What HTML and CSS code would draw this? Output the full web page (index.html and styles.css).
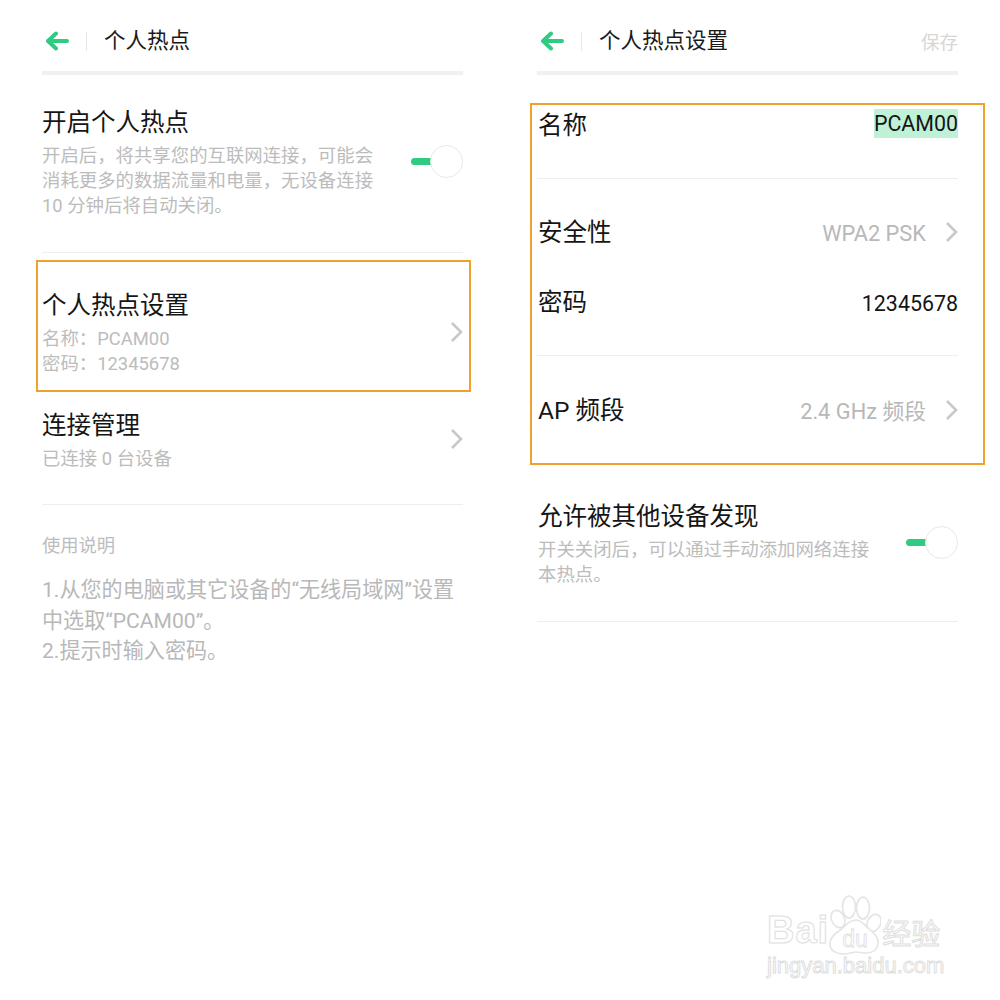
FILE: index.html
```html
<!DOCTYPE html>
<html lang="zh-CN">
<head>
  <meta charset="UTF-8">
  <title>个人热点</title>
  <link rel="stylesheet" href="styles.css">
</head>
<body>
  <div class="page">
    <!-- 左边：个人热点 -->
    <section class="pane">
      <header class="topbar">
        <svg class="back" width="24" height="20" viewBox="0 0 24 20"><path d="M22 10H4M11 2.5 3 10l8 7.5" fill="none" stroke="#2ecb80" stroke-width="4" stroke-linecap="round" stroke-linejoin="round"/></svg>
        <span class="sep"></span>
        <h1 class="title">个人热点</h1>
      </header>

      <div class="item item-hotspot">
        <div class="text">
          <h2 class="name">开启个人热点</h2>
          <p class="desc">开启后，将共享您的互联网连接，可能会消耗更多的数据流量和电量，无设备连接 10 分钟后将自动关闭。</p>
        </div>
        <span class="toggle"><span class="track"></span><span class="knob"></span></span>
      </div>

      <div class="item item-settings">
        <div class="text">
          <h2 class="name">个人热点设置</h2>
          <p class="desc">名称：PCAM00<br>密码：12345678</p>
        </div>
        <svg class="chevron" width="13" height="22" viewBox="0 0 13 22"><path d="M2 2l9 9-9 9" fill="none" stroke="#c8c8c8" stroke-width="2.6"/></svg>
      </div>

      <div class="item item-manage">
        <div class="text">
          <h2 class="name">连接管理</h2>
          <p class="desc">已连接 0 台设备</p>
        </div>
        <svg class="chevron" width="13" height="22" viewBox="0 0 13 22"><path d="M2 2l9 9-9 9" fill="none" stroke="#c8c8c8" stroke-width="2.6"/></svg>
      </div>

      <p class="help-title">使用说明</p>
      <p class="help">1.从您的电脑或其它设备的“无线局域网”设置中选取“PCAM00”。<br>2.提示时输入密码。</p>

      <div class="mark mark-left"></div>
    </section>

    <!-- 右边：个人热点设置 -->
    <section class="pane">
      <header class="topbar">
        <svg class="back" width="24" height="20" viewBox="0 0 24 20"><path d="M22 10H4M11 2.5 3 10l8 7.5" fill="none" stroke="#2ecb80" stroke-width="4" stroke-linecap="round" stroke-linejoin="round"/></svg>
        <span class="sep"></span>
        <h1 class="title">个人热点设置</h1>
        <span class="save">保存</span>
      </header>

      <div class="field field-name">
        <span class="name">名称</span>
        <span class="value"><span class="selected">PCAM00</span></span>
      </div>
      <div class="field field-security">
        <span class="name">安全性</span>
        <span class="value-muted">WPA2 PSK</span>
        <svg class="chevron" width="13" height="22" viewBox="0 0 13 22"><path d="M2 2l9 9-9 9" fill="none" stroke="#c8c8c8" stroke-width="2.6"/></svg>
      </div>
      <div class="field field-password">
        <span class="name">密码</span>
        <span class="value">12345678</span>
      </div>
      <div class="field field-band">
        <span class="name">AP 频段</span>
        <span class="value-muted">2.4 GHz 频段</span>
        <svg class="chevron" width="13" height="22" viewBox="0 0 13 22"><path d="M2 2l9 9-9 9" fill="none" stroke="#c8c8c8" stroke-width="2.6"/></svg>
      </div>

      <div class="item item-discover">
        <div class="text">
          <h2 class="name">允许被其他设备发现</h2>
          <p class="desc">开关关闭后，可以通过手动添加网络连接本热点。</p>
        </div>
        <span class="toggle"><span class="track"></span><span class="knob"></span></span>
      </div>

      <div class="mark mark-right"></div>
    </section>
  </div>

  <!-- 水印 -->
  <div class="watermark">
    <div class="wm-top">
      <span class="wm-bai">Bai</span>
      <svg class="wm-paw" width="52" height="60" viewBox="0 0 52 60">
        <g fill="#fff" stroke="#e4e4e4" stroke-width="1.6">
          <ellipse cx="9" cy="24" rx="6.5" ry="9" transform="rotate(-25 9 24)"/>
          <ellipse cx="20" cy="12" rx="6.5" ry="11"/>
          <ellipse cx="34" cy="13" rx="6.5" ry="11"/>
          <ellipse cx="45" cy="28" rx="6.5" ry="9" transform="rotate(25 45 28)"/>
          <path d="M27 25c6 0 9 6 13 9 6 5 10 9 9 15-1 7-7 9-12 9-4 0-7-1-10-1s-7 2-12 2c-7 0-14-3-14-10 0-6 4-10 9-13 6-4 9-11 17-11z"/>
        </g>
        <text x="26" y="52" text-anchor="middle" class="wm-du">du</text>
      </svg>
      <span class="wm-jy">经验</span>
    </div>
    <div class="wm-url">jingyan.baidu.com</div>
  </div>
</body>
</html>
```

FILE: styles.css
```css
* {
  box-sizing: border-box;
}

html,
body {
  margin: 0;
  background: #fff;
}

body {
  font-family: Roboto, "Noto Sans CJK SC", sans-serif;
  color: #151515;
}

h1,
h2,
p {
  margin: 0;
  font-weight: normal;
}

.page {
  display: flex;
  height: 1000px;
}

.pane {
  position: relative;
  width: 495px;
  padding: 0 32px 0 42px;
}

/* top bar */
.topbar {
  display: flex;
  align-items: center;
  height: 75px;
  padding: 11px 5px 0 3px;
  border-bottom: 4px solid #f0f0f0;
}

.back {
  margin-right: 17px;
}

.sep {
  width: 1px;
  height: 19px;
  background: #e8e8e8;
  margin-right: 17px;
}

.title {
  font-size: 21.5px;
  line-height: 30px;
  color: #1a1a1a;
}

.save {
  margin-left: auto;
  margin-right: -5px;
  font-size: 18.5px;
  color: #d6d6d6;
}

/* list rows */
.item {
  display: flex;
  align-items: center;
  justify-content: space-between;
}

.name {
  font-size: 24.5px;
  line-height: 34px;
}

.desc {
  margin-top: 3px;
  font-size: 18.4px;
  line-height: 25px;
  color: #bcbcbc;
}

.item-hotspot {
  padding: 31px 0 34px;
  border-bottom: 1px solid #eee;
}

.item-hotspot .text,
.item-discover .text {
  width: 340px;
}

.item-settings {
  padding: 36px 0 32px;
}

.item-manage {
  padding: 1px 0 33px;
  border-bottom: 1px solid #eee;
}

.item-discover {
  padding: 72px 0 34px;
  border-bottom: 1px solid #eee;
}

.item-discover .text {
  margin-left: 1px;
}

.chevron {
  flex: none;
  margin-bottom: 2px;
}

.toggle {
  display: flex;
  align-items: center;
  flex: none;
  margin-bottom: 2px;
}

.track {
  width: 20px;
  height: 7px;
  border-radius: 4px 0 0 4px;
  background: #2ecb80;
}

.knob {
  width: 33px;
  height: 33px;
  margin-left: -1px;
  border: 1px solid #e8e8e8;
  border-radius: 50%;
  background: #fff;
}

/* help text */
.help-title {
  margin-top: 28px;
  font-size: 18.3px;
  line-height: 26px;
  color: #bcbcbc;
}

.help {
  margin-top: 16px;
  font-size: 21.1px;
  line-height: 30.5px;
  color: #b8b8b8;
}

/* settings fields */
.field {
  display: flex;
  align-items: center;
}

.field .name {
  margin-right: auto;
  margin-left: 1px;
}

.value {
  font-size: 21.4px;
}

.selected {
  display: block;
  margin-top: 2px;
  line-height: 29px;
  background: #bff1d6;
}

.value-muted {
  margin-right: 19px;
  font-size: 21.8px;
  color: #b8b8b8;
}

.field-name {
  align-items: flex-start;
  padding: 32px 0 35px;
  border-bottom: 1px solid #eee;
}

.field-name .name {
  margin-top: 2px;
}

.field-security {
  padding: 37px 0 0;
}

.field-password {
  padding: 36px 0 35px;
  border-bottom: 1px solid #eee;
}

.field-band {
  padding: 38px 0 0;
}

.field-band .value-muted,
.field-band .chevron {
  margin-bottom: 3px;
}

/* orange highlight boxes over the screenshot */
.mark {
  position: absolute;
  border: 2px solid #f0a030;
}

.mark-left {
  left: 36px;
  top: 260px;
  width: 435px;
  height: 132px;
}

.mark-right {
  left: 35px;
  top: 103px;
  width: 455px;
  height: 362px;
}

/* watermark */
.watermark {
  position: absolute;
  left: 767px;
  top: 892px;
  width: 182px;
  font-family: "Liberation Sans", sans-serif;
  color: #fff;
  -webkit-text-stroke: 1px #dedede;
}

.wm-top {
  display: flex;
  align-items: flex-end;
  height: 60px;
}

.wm-bai {
  font-size: 38px;
  line-height: 44px;
  font-weight: bold;
  letter-spacing: 1px;
}

.wm-paw {
  flex: none;
  margin-left: 0;
  margin-bottom: -3px;
}

.wm-du {
  font-size: 23px;
  fill: #fff;
  stroke: #dedede;
  stroke-width: 0.8;
}

.wm-jy {
  margin-left: 1px;
  font-family: "Noto Sans CJK SC", sans-serif;
  font-size: 29px;
  line-height: 40px;
}

.wm-url {
  margin-top: 2px;
  font-size: 22px;
  line-height: 24px;
}
```
